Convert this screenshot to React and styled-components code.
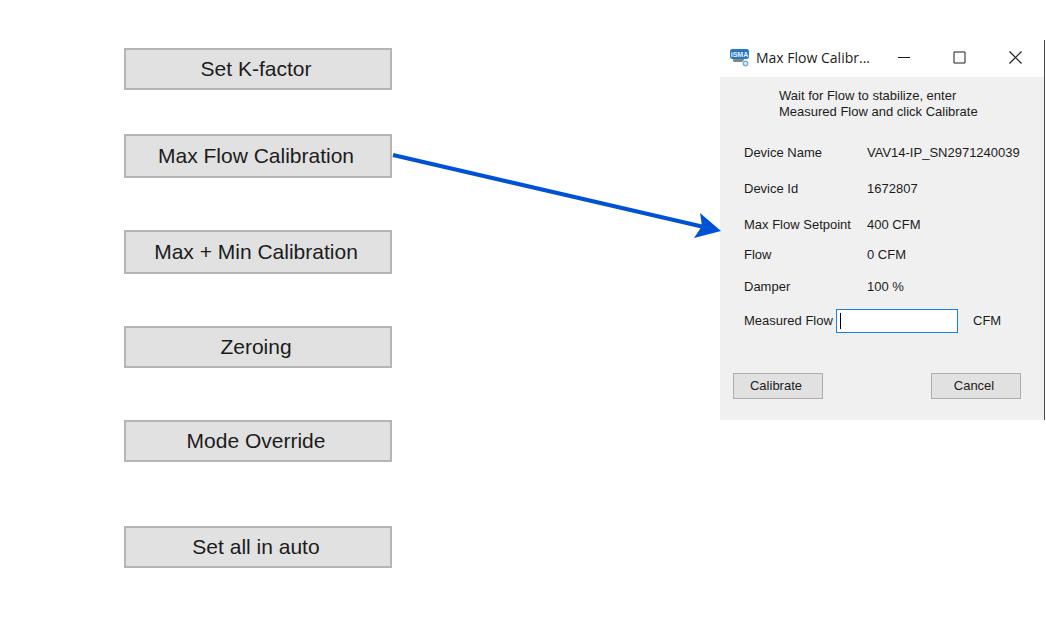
import React from "react";
import styled, { createGlobalStyle } from "styled-components";

const GlobalStyle = createGlobalStyle`
	* {
		box-sizing: border-box;
	}

	body {
		margin: 0;
		background: #ffffff;
		color: #1c1c1c;
		font-family: "Liberation Sans", Arial, sans-serif;
	}
`;

const Page = styled.main`
	display: grid;
	grid-template-columns: minmax(220px, 268fr) minmax(60px, 328fr) minmax(
			325px,
			325fr
		);
	align-items: start;
	padding: 40px 1px 40px 124px;

	@media (max-width: 760px) {
		padding-left: 24px;
	}
`;

const ActionList = styled.nav`
	display: flex;
	flex-direction: column;
	padding-top: 8px;
`;

const ActionButton = styled.button`
	width: 100%;
	height: ${({ $tall }) => ($tall ? "44px" : "42px")};
	margin: 0 0 ${({ $space }) => $space || 0}px;
	padding: 0 4px 0 0;
	border: 2px solid #b5b5b5;
	background: #e1e1e1;
	color: #1c1c1c;
	font-family: inherit;
	font-size: 21px;
	line-height: 24px;
`;

const Arrow = styled.svg`
	display: block;
	width: 100%;
	margin-top: 104px;
	overflow: visible;
	position: relative;
	z-index: 1;
`;

const Dialog = styled.section`
	border-right: 1px solid #4a4a4a;
	background: #f0f0f0;
	font-size: 13px;
	line-height: 16px;
`;

const TitleBar = styled.header`
	display: flex;
	align-items: center;
	height: 37px;
	padding: 0 1px 2px 9px;
	background: #ffffff;

	h1 {
		flex: 1;
		margin: 0 0 0 6px;
		font-family: "Open Sans", "Noto Sans", sans-serif;
		font-size: 14px;
		font-weight: 400;
		line-height: 20px;
		white-space: nowrap;
	}
`;

const WindowButton = styled.button`
	display: flex;
	align-items: center;
	justify-content: center;
	width: 56px;
	height: 35px;
	padding: 0;
	border: 0;
	background: transparent;
	color: #1c1c1c;
`;

const Body = styled.form`
	display: flex;
	flex-direction: column;
	padding: 11px 23px 21px 24px;
`;

const Message = styled.p`
	margin: 0 0 25px 35px;
`;

const Row = styled.div`
	display: flex;
	margin-bottom: ${({ $space }) => $space}px;
`;

const Name = styled.span`
	flex: 0 0 123px;
`;

const FieldRow = styled.div`
	display: flex;
	align-items: center;
	margin-bottom: 40px;

	label {
		flex: 0 0 92px;
	}
`;

const FlowInput = styled.input`
	width: 122px;
	height: 24px;
	margin-right: 15px;
	padding: 0 4px;
	border: 1px solid #1683de;
	border-radius: 0;
	outline: 0;
	background: #ffffff linear-gradient(#000000, #000000) 3px 3px / 1px 16px
		no-repeat;
	caret-color: transparent;
	font-family: inherit;
	font-size: 13px;
`;

const Footer = styled.footer`
	display: flex;
	justify-content: space-between;
	margin-left: -11px;
`;

const DialogButton = styled.button`
	width: 90px;
	height: 26px;
	padding: 0 4px 0 0;
	border: 1px solid #adadad;
	background: #e1e1e1;
	color: #1c1c1c;
	font-family: inherit;
	font-size: 13px;
	line-height: 16px;
`;

const actions = [
	{ label: "Set K-factor", space: 44 },
	{ label: "Max Flow Calibration", space: 52, tall: true },
	{ label: "Max + Min Calibration", space: 52, tall: true },
	{ label: "Zeroing", space: 52 },
	{ label: "Mode Override", space: 64 },
	{ label: "Set all in auto" },
];

const details = [
	{ name: "Device Name", value: "VAV14-IP_SN2971240039", space: 20 },
	{ name: "Device Id", value: "1672807", space: 20 },
	{ name: "Max Flow Setpoint", value: "400 CFM", space: 14 },
	{ name: "Flow", value: "0 CFM", space: 16 },
	{ name: "Damper", value: "100 %", space: 14 },
];

const Logo = () => (
	<svg width="21" height="20" viewBox="0 0 21 20" aria-hidden="true">
		<rect x="4" y="10" width="11" height="4" rx="1.5" fill="#7f868c" />
		<rect x="1" y="1" width="19" height="10" rx="2.5" fill="#2878c0" />
		<text
			x="10.5"
			y="8.5"
			textAnchor="middle"
			fontFamily="Liberation Sans, sans-serif"
			fontSize="7"
			fontWeight="700"
			fill="#e3eff9"
		>
			iSMA
		</text>
		<circle cx="16.5" cy="15.5" r="3.6" fill="#ffffff" />
		<circle
			cx="16.5"
			cy="15.5"
			r="2.2"
			fill="#e6f0fa"
			stroke="#78acdc"
			strokeWidth="1.5"
		/>
	</svg>
);

const App = () => {
	return (
		<>
			<GlobalStyle />
			<Page>
				<ActionList aria-label="Calibration">
					{actions.map(({ label, space, tall }) => (
						<ActionButton key={label} type="button" $space={space} $tall={tall}>
							{label}
						</ActionButton>
					))}
				</ActionList>

				<Arrow viewBox="0 0 328 100" aria-hidden="true">
					<path d="M1 11L312 83" stroke="#0052d4" strokeWidth="4" />
					<path d="M329 87L308 69L310 82L302 94Z" fill="#0052d4" />
				</Arrow>

				<Dialog aria-label="Max Flow Calibration">
					<TitleBar>
						<Logo />
						<h1>Max Flow Calibr...</h1>
						<WindowButton type="button" aria-label="Minimize">
							<svg width="13" height="13" viewBox="0 0 13 13">
								<path d="M1 6.5h12" stroke="currentColor" />
							</svg>
						</WindowButton>
						<WindowButton type="button" aria-label="Maximize">
							<svg width="13" height="13" viewBox="0 0 13 13">
								<path d="M1 1h11v11H1z" fill="none" stroke="currentColor" />
							</svg>
						</WindowButton>
						<WindowButton type="button" aria-label="Close">
							<svg width="13" height="13" viewBox="0 0 13 13">
								<path
									d="M.5.5l12 12M12.5.5l-12 12"
									stroke="currentColor"
									strokeWidth="1.2"
								/>
							</svg>
						</WindowButton>
					</TitleBar>

					<Body>
						<Message>
							Wait for Flow to stabilize, enter
							<br />
							Measured Flow and click Calibrate
						</Message>
						{details.map(({ name, value, space }) => (
							<Row key={name} $space={space}>
								<Name>{name}</Name>
								<span>{value}</span>
							</Row>
						))}
						<FieldRow>
							<label htmlFor="measured">Measured Flow</label>
							<FlowInput id="measured" type="text" />
							<span>CFM</span>
						</FieldRow>
						<Footer>
							<DialogButton type="button">Calibrate</DialogButton>
							<DialogButton type="button">Cancel</DialogButton>
						</Footer>
					</Body>
				</Dialog>
			</Page>
		</>
	);
};

export default App;
